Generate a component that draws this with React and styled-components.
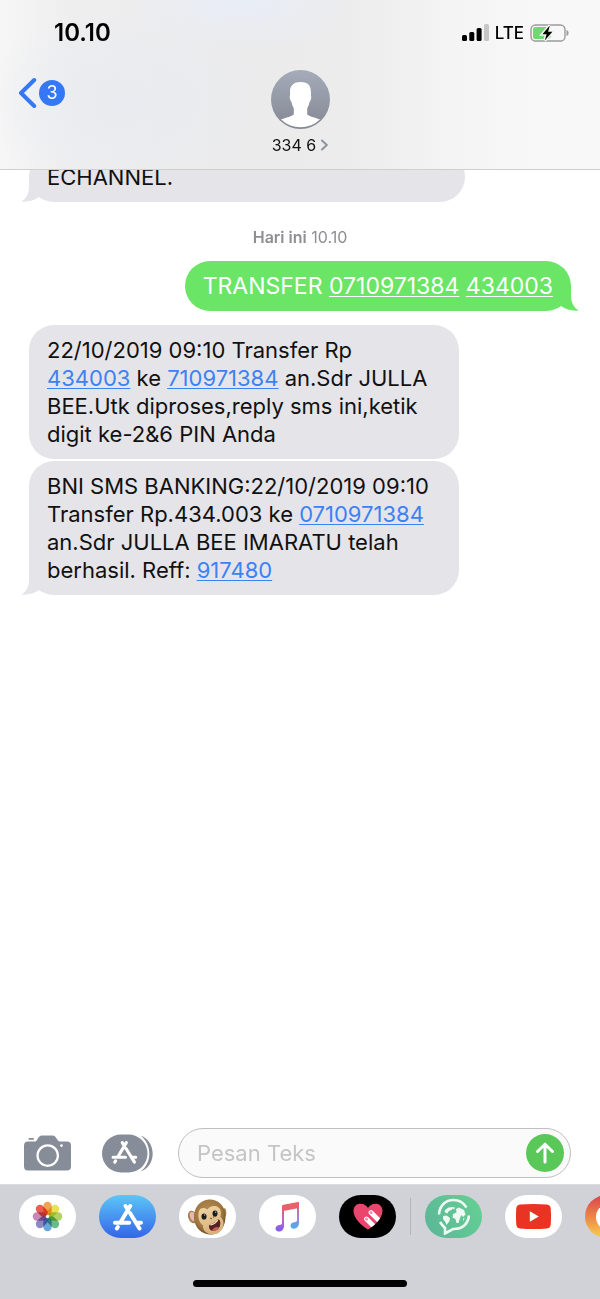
import React from "react";
import styled, { createGlobalStyle, css } from "styled-components";

const GlobalStyle = createGlobalStyle`
  * { box-sizing: border-box; }
  body {
    margin: 0;
    background: #fff;
    font-family: Inter, "Liberation Sans", sans-serif;
    color: #111;
  }
  button, input { font: inherit; color: inherit; }
  button { border: 0; padding: 0; margin: 0; background: none; cursor: pointer; }
  svg { display: block; flex: none; }
`;

const Screen = styled.div`
  display: flex;
  flex-direction: column;
  min-height: 100vh;
  overflow: hidden;
`;

const Header = styled.header`
  background:
    radial-gradient(ellipse 110px 50px at 40% 0, #e8edf6 0%, rgba(232, 237, 246, 0) 100%),
    radial-gradient(ellipse 140px 90px at 20% 60%, #e9ebf0 0%, rgba(233, 235, 240, 0) 100%),
    linear-gradient(90deg, #f6f6f6 0%, #eeeeef 12%, #ebebec 40%, #ececed 58%, #f4f4f4 76%, #f8f8f8 90%);
  border-bottom: 1px solid #cfcfcf;
`;

const StatusBar = styled.div`
  display: flex;
  align-items: center;
  justify-content: space-between;
  height: 66px;
  padding: 0 31px 0 54px;
  color: #000;
`;

const Clock = styled.time`
  font-size: 24px;
  line-height: 28px;
  font-weight: 600;
`;

const StatusIcons = styled.div`
  display: flex;
  align-items: center;
  gap: 6px;
  font-size: 17px;
  line-height: 20px;
  font-weight: 500;
`;

const NavBar = styled.nav`
  display: grid;
  grid-template-columns: 1fr auto 1fr;
  align-items: start;
  padding: 4px 18px 14px;
`;

const BackButton = styled.button`
  display: flex;
  align-items: center;
  justify-self: start;
  gap: 2px;
  height: 46px;
`;

const UnreadBadge = styled.span`
  display: grid;
  place-items: center;
  width: 26px;
  height: 26px;
  border-radius: 50%;
  background: #3478f6;
  color: #fff;
  font-size: 18px;
  line-height: 26px;
`;

const Contact = styled.button`
  display: flex;
  flex-direction: column;
  align-items: center;
  gap: 6px;
`;

const ContactName = styled.span`
  display: flex;
  align-items: center;
  gap: 5px;
  font-size: 16px;
  line-height: 20px;
`;

const Thread = styled.main`
  flex: 1;
  display: flex;
  flex-direction: column;
  overflow: hidden;
  padding: 0 29px 24px;
`;

const Bubble = styled.article`
  position: relative;
  align-self: flex-start;
  max-width: 430px;
  padding: 11px 18px;
  border-radius: 25px;
  background: #e5e4e9;
  font-size: 22px;
  line-height: 28px;
  margin-top: 2px;
  a { color: #3b82f6; text-decoration: underline; text-decoration-thickness: 1px; text-underline-offset: 2px; }

  ${(p) => p.$scrolled && css`
    width: 436px;
    max-width: 100%;
    margin-top: -18px;
  `}
  ${(p) => p.$first && css`
    margin-top: 14px;
  `}
  ${(p) => p.$sent && css`
    align-self: flex-end;
    margin-top: 0;
    background: #6ae566;
    color: #fff;
    font-size: 23px;
    a { color: #fff; }
  `}
`;

const TailShape = styled.svg`
  position: absolute;
  bottom: 0;
  ${(p) => (p.$sent ? "right: -8px; transform: scaleX(-1);" : "left: -8px;")}
`;

const DateStamp = styled.p`
  margin: 25px 0 14px;
  text-align: center;
  font-size: 16px;
  line-height: 20px;
  color: #8e8e93;
  b { font-weight: 600; }
`;

const Composer = styled.form`
  display: flex;
  align-items: center;
  gap: 25px;
  padding: 0 29px 6px 24px;
`;

const ComposerActions = styled.div`
  display: flex;
  align-items: center;
  gap: 31px;
`;

const MessageField = styled.div`
  flex: 1;
  min-width: 0;
  display: flex;
  align-items: center;
  height: 50px;
  padding: 0 6px 0 18px;
  border: 1px solid #bfbfc3;
  border-radius: 25px;
  background: #fafafa;
`;

const MessageInput = styled.input`
  flex: 1;
  min-width: 0;
  padding: 0;
  border: 0;
  outline: 0;
  background: transparent;
  font-size: 22px;
  line-height: 28px;
  &::placeholder { color: #c5c5c8; opacity: 1; }
`;

const SendButton = styled.button`
  display: grid;
  place-items: center;
  width: 38px;
  height: 38px;
  border-radius: 50%;
  background: #5ac759;
`;

const Drawer = styled.footer`
  display: flex;
  flex-direction: column;
  align-items: center;
  gap: 42px;
  padding: 10px 0 12px;
  border-top: 1px solid #dcdce0;
  background: #d1d2d8;
`;

const AppStrip = styled.div`
  display: flex;
  align-items: center;
  align-self: stretch;
  gap: 23px;
  padding-left: 19px;
  overflow: hidden;
`;

const AppGroup = styled.div`
  display: flex;
  gap: 23px;
  flex: none;
  & + & {
    position: relative;
    padding-left: 6px;
  }
  & + &::before {
    content: "";
    position: absolute;
    left: -9px;
    top: 3px;
    width: 1px;
    height: 37px;
    background: #b4b5bb;
  }
`;

const AppButton = styled.button`
  display: grid;
  place-items: center;
  flex: none;
  width: 57px;
  height: 43px;
  border-radius: 22px;
  overflow: hidden;
  background: ${(p) => p.$fill || "#fff"};
`;

const HomeIndicator = styled.div`
  width: 214px;
  height: 7px;
  border-radius: 4px;
  background: #000;
`;

function Tail({ sent }) {
  return (
    <TailShape $sent={sent} width="18" height="26" viewBox="0 0 18 26" aria-hidden="true">
      <path
        d="M8 0V10C8 18 5 23 0 25.5C7 26.2 13 24.5 18 21V0Z"
        fill={sent ? "#6ae566" : "#e5e4e9"}
      />
    </TailShape>
  );
}

function SignalIcon() {
  return (
    <svg width="27" height="18" viewBox="0 0 27 18" aria-label="Signal">
      <rect x="0" y="11" width="5" height="6" rx="1.5" />
      <rect x="7.3" y="8" width="5" height="9" rx="1.5" />
      <rect x="14.6" y="4" width="5" height="13" rx="1.5" />
      <rect x="22" y="0" width="5" height="17" rx="1.5" fill="#c6c6c6" />
    </svg>
  );
}

function BatteryIcon() {
  return (
    <svg width="39" height="18" viewBox="0 0 39 18" aria-label="Charging">
      <rect x="1" y="1" width="34" height="16" rx="4.6" fill="none" stroke="#9b9b9b" strokeWidth="1.4" />
      <path d="M36.5 6C39.3 6.8 39.3 11.2 36.5 12Z" fill="#9b9b9b" />
      <path d="M5.6 3H19L15 15H5.6Q3 15 3 12.4V5.6Q3 3 5.6 3Z" fill="#73d772" />
      <path d="M20.5 11L21.5 12L19 15H17.5Z" fill="#73d772" />
      <path d="M19.8 1.5L12.4 10.2H16.6L14.8 16.5L22.4 7.8H18.1Z" fill="#000" stroke="#f5f5f5" strokeWidth="3" paintOrder="stroke" />
    </svg>
  );
}

function Avatar() {
  return (
    <svg width="59" height="59" viewBox="0 0 59 59" aria-hidden="true">
      <defs>
        <linearGradient id="avatar-bg" x2="0" y2="1">
          <stop stopColor="#a6abb9" />
          <stop offset="1" stopColor="#848894" />
        </linearGradient>
        <clipPath id="avatar-clip"><circle cx="29.5" cy="29.5" r="27.8" /></clipPath>
      </defs>
      <circle cx="29.5" cy="29.5" r="29.5" fill="url(#avatar-bg)" />
      <path
        clipPath="url(#avatar-clip)"
        fill="#fff"
        d="M29.5 12C23 12 18.7 15.5 19 22C19.1 24 19.1 25 19 26C18.3 27 19 30.5 20.5 32C21 35 22 36.500 22.800 38.500V44.500C20 47 14 47.500 9 50V60H50V50C45 47.500 39 47 36.200 44.500V38.500C37 36.500 38 35 38.500 32C40 30.500 40.700 27 40 26C40.500 16 38 12 29.500 12Z"
      />
    </svg>
  );
}

const STORE_STROKES = "M18.2 3L8.2 19.8M13.5 3L16 7M18 10L27.5 25.5M3 19.8H17.2M24.2 19.8H29M5.8 24L4.9 25.5";

function StoreGlyph() {
  return (
    <svg width="32" height="28" viewBox="0 0 32 28" fill="none" stroke="#fff" strokeWidth="4" strokeLinecap="round" aria-hidden="true">
      <path d={STORE_STROKES} />
    </svg>
  );
}

function CameraIcon() {
  return (
    <svg width="47" height="36" viewBox="0 0 47 36" aria-hidden="true">
      <path d="M4 6.5H11C14 6.5 13.5 .5 18 .5H28.5C33 .5 32.5 6.5 36 6.5H43Q47 6.5 47 10.5V31.5Q47 35.5 43 35.5H4Q0 35.5 0 31.5V10.5Q0 6.5 4 6.5Z" fill="#878d98" />
      <rect x="4.5" y="3" width="5.5" height="1.8" rx=".9" fill="#878d98" />
      <circle cx="23.7" cy="20.6" r="10.2" fill="none" stroke="#fff" strokeWidth="2.2" />
      <circle cx="37.5" cy="10.6" r="1.3" fill="#fff" />
    </svg>
  );
}

function AppDrawerIcon() {
  return (
    <svg width="51" height="39" viewBox="0 0 51 39" aria-hidden="true">
      <rect x="0" y=".5" width="45.5" height="38" rx="19" fill="#878d98" />
      <path d="M38.5 1.5C54.5 7 55 32 38.5 37.5C50.5 29 50 10 38.5 1.5Z" fill="#878d98" />
      <g transform="translate(8.5 6) scale(.87)" fill="none" stroke="#fff" strokeWidth="3.6" strokeLinecap="round">
        <path d={STORE_STROKES} />
      </g>
    </svg>
  );
}

const PETALS = ["#f0973a", "#e6dd3c", "#a8cc4c", "#55b27c", "#5598d4", "#7d77b8", "#c078ad", "#e4483c"];

const Petal = styled.rect`
  mix-blend-mode: multiply;
`;

function PhotosIcon() {
  return (
    <svg width="31" height="31" viewBox="0 0 31 31" aria-hidden="true">
      {PETALS.map((color, i) => (
        <Petal
          key={color}
          x="11.3"
          y=".7"
          width="8.4"
          height="13.5"
          rx="4.2"
          fill={color}
          fillOpacity=".88"
          transform={`rotate(${i * 45} 15.5 15.5)`}
        />
      ))}
      <circle cx="15.5" cy="15.5" r="1.2" fill="#fff" />
    </svg>
  );
}

function MonkeyIcon() {
  return (
    <svg width="39" height="36" viewBox="0 0 39 36" aria-hidden="true">
      <defs>
        <radialGradient id="monkey-fur" cx=".45" cy=".4" r=".6">
          <stop stopColor="#b99156" />
          <stop offset=".75" stopColor="#9c7540" />
          <stop offset="1" stopColor="#6d4d26" />
        </radialGradient>
        <linearGradient id="monkey-face" x2=".3" y2="1">
          <stop stopColor="#f1d5a4" />
          <stop offset="1" stopColor="#d9b27c" />
        </linearGradient>
      </defs>
      <ellipse cx="4.5" cy="18" rx="4.3" ry="6.5" fill="#a8824f" transform="rotate(-18 4.5 18)" />
      <ellipse cx="4.8" cy="17.5" rx="2.7" ry="4.7" fill="#e8b8b4" transform="rotate(-18 4.8 17.5)" />
      <ellipse cx="36.5" cy="13.5" rx="1.8" ry="4.3" fill="#a8824f" />
      <path d="M21 .5C30 0 37 7 37.5 16C38 26 33 35.5 24 35.5C14 36 7 29 6 20C5 9 12 1 21 .5Z" fill="url(#monkey-fur)" />
      <path d="M11 12C12 8.5 16.5 8 19.5 10.5C21.5 7 27 6 30.5 8.5C33.5 10.5 33 15 32.5 18C36 21 36.5 26 34 30C32 34 28 35.3 24 35.3C18 35 14.5 31 15 26.5C10.5 23 9.500 17 11 12Z" fill="url(#monkey-face)" />
      <ellipse cx="16" cy="17.5" rx="2.5" ry="3.1" fill="#161b1d" />
      <ellipse cx="27" cy="14.6" rx="2.5" ry="3.1" fill="#161b1d" />
      <circle cx="16.7" cy="16" r=".7" fill="#aec0c4" />
      <circle cx="27.7" cy="13.2" r=".7" fill="#aec0c4" />
      <path d="M22.3 19.3L23.5 19.6M25.3 18.3L26 17.8" stroke="#8a6238" strokeWidth="1.1" strokeLinecap="round" />
      <path d="M21.5 26C24 25 28 23 30 20.5C32.5 20 33 25 31.5 28C29.5 32 24 33 22 30.5C21 29 20.5 26.5 21.5 26Z" fill="#54211e" />
      <path d="M24 31.5C25 28.5 29 27 31 28.5C29.5 31.5 27 32.5 24 31.5Z" fill="#c35c5a" />
      <path d="M22.5 26.2C25 25.5 28 23.5 29.8 21.3" stroke="#f3e4d4" strokeWidth="1.2" fill="none" />
    </svg>
  );
}

function MusicIcon() {
  return (
    <svg width="25" height="30" viewBox="0 0 25 30" aria-hidden="true">
      <defs>
        <linearGradient id="music-left" x2="0" y2="1">
          <stop stopColor="#ec5a65" />
          <stop offset=".5" stopColor="#c768b8" />
          <stop offset="1" stopColor="#7b5cf6" />
        </linearGradient>
        <linearGradient id="music-right" x2="0" y2="1">
          <stop stopColor="#ec5a65" />
          <stop offset=".5" stopColor="#b779cf" />
          <stop offset="1" stopColor="#45b0f4" />
        </linearGradient>
      </defs>
      <path d="M7 4L9 3V24C9 27.5 6.5 29.5 4 29.5C1.5 29.5 .5 28 .5 26.5C.5 24.5 2 23.4 4 23C6 22.7 7 22.5 7 21Z" fill="url(#music-left)" />
      <path d="M22 .8L24 .3V21C24 24.5 21.5 26.7 19 26.7C16.5 26.7 15.5 25.3 15.5 23.8C15.5 21.8 17 20.6 19 20.3C21 20 22 19.8 22 18Z" fill="url(#music-right)" />
      <path d="M7 4.5Q7 3 8.5 2.7L23 0Q24 0 24 1V6L7 9.2Z" fill="#e95f6b" />
    </svg>
  );
}

const HEART_PATH = "M15 26.5C10 23.5 .5 16 .5 8C.5 3.5 3.5 .8 7.5 .8C11 .8 13.5 2.5 15 5C16.5 2.5 19 .8 22.5 .8C26.5 .8 29.5 3.5 29.5 8C29.5 16 20 23.5 15 26.5Z";

function HeartIcon() {
  return (
    <svg width="30" height="27" viewBox="0 0 30 27" aria-hidden="true">
      <clipPath id="heart-clip"><path d={HEART_PATH} /></clipPath>
      <path d={HEART_PATH} fill="#eb456e" />
      <g clipPath="url(#heart-clip)" strokeLinecap="round">
        <path d="M13.5 16L22 24.5M18 9.5L28 19.5" stroke="#fff" strokeWidth="4.8" />
        <path d="M13.3 15.8L13.8 16.3M17.8 9.3L18.3 9.8" stroke="#f28ba5" strokeWidth="2.6" />
      </g>
    </svg>
  );
}

function GlobeChatIcon() {
  return (
    <svg width="34" height="37" viewBox="0 0 34 37" fill="#effaf4" aria-hidden="true">
      <path d="M2 16.5C2.5 7 9 2 16.5 2C22 2 26.5 4.5 29.5 9.5M32 17.5C31 27 24 31.5 16 31L8 35.5V30C5 27 4 25.5 3 24" fill="none" stroke="#effaf4" strokeWidth="2.6" />
      <path d="M8 12L11.5 9.5L17 9L14.5 12L12 13L10 15.5L7.5 14ZM6 18L9.5 17.5L13 20L12.5 23L9.5 27L8 23.5L6 21Z" />
      <path d="M19 11L22 9.5L27 12L28.5 16.5L26 19L24.5 17L23 20L21.5 25H19.5L18.5 21L15.5 19.5L16 16L19.5 14.5ZM15 10L17.5 9V11.5ZM26 20.5L27.5 20L26.5 23.5Z" />
    </svg>
  );
}

function PlayIcon() {
  return (
    <svg width="35" height="25" viewBox="0 0 35 25" aria-hidden="true">
      <path d="M4 .6Q17.5 -.6 31 .6Q34.4 1 34.7 4.5Q35.3 12.5 34.7 20.5Q34.4 24 31 24.4Q17.5 25.6 4 24.4Q.6 24 .3 20.5Q-.3 12.5 .3 4.5Q.6 1 4 .6Z" fill="#e93323" />
      <path d="M13.8 7.3L22.8 12.5L13.8 17.7Z" fill="#fff" />
    </svg>
  );
}

function RingIcon() {
  return (
    <svg width="36" height="28" viewBox="0 0 36 28" aria-hidden="true">
      <rect width="36" height="28" rx="14" fill="#fff" />
    </svg>
  );
}

const APPS = [
  { name: "Foto", icon: <PhotosIcon /> },
  { name: "App Store", fill: "linear-gradient(#5cc6f6, #3465e8)", icon: <StoreGlyph /> },
  { name: "Animoji", icon: <MonkeyIcon /> },
  { name: "Musik", icon: <MusicIcon /> },
  { name: "Digital Touch", fill: "#000", icon: <HeartIcon /> },
];

const EXTRA_APPS = [
  { name: "Terjemah", fill: "linear-gradient(60deg, #5ab597, #66d193)", icon: <GlobeChatIcon /> },
  { name: "Video", icon: <PlayIcon /> },
  { name: "Lainnya", fill: "linear-gradient(#d9434f, #e97e48 45%, #f7cf4e)", icon: <RingIcon /> },
];

function AppList({ apps }) {
  return (
    <AppGroup>
      {apps.map((app) => (
        <AppButton key={app.name} type="button" aria-label={app.name} $fill={app.fill}>
          {app.icon}
        </AppButton>
      ))}
    </AppGroup>
  );
}

export default function App() {
  return (
    <Screen>
      <GlobalStyle />
      <Header>
        <StatusBar>
          <Clock>10.10</Clock>
          <StatusIcons>
            <SignalIcon />
            <span>LTE</span>
            <BatteryIcon />
          </StatusIcons>
        </StatusBar>
        <NavBar>
          <BackButton type="button" aria-label="Kembali">
            <svg width="19" height="32" viewBox="0 0 19 32" fill="none" stroke="#3478f6" strokeWidth="4" strokeLinecap="round" strokeLinejoin="round" aria-hidden="true">
              <path d="M16.2 3L3 16L16.2 29" />
            </svg>
            <UnreadBadge>3</UnreadBadge>
          </BackButton>
          <Contact type="button">
            <Avatar />
            <ContactName>
              334 6
              <svg width="7" height="12" viewBox="0 0 7 12" fill="none" stroke="#8e949e" strokeWidth="2" strokeLinecap="round" strokeLinejoin="round" aria-hidden="true">
                <path d="M1 1.5L5.8 6L1 10.5" />
              </svg>
            </ContactName>
          </Contact>
        </NavBar>
      </Header>

      <Thread>
        <Bubble $scrolled>
          ECHANNEL.
          <Tail />
        </Bubble>
        <DateStamp><b>Hari ini</b> 10.10</DateStamp>
        <Bubble $sent>
          TRANSFER <a href="tel:0710971384">0710971384</a> <a href="tel:434003">434003</a>
          <Tail sent />
        </Bubble>
        <Bubble $first>
          22/10/2019 09:10 Transfer Rp <a href="tel:434003">434003</a> ke{" "}
          <a href="tel:710971384">710971384</a> an.Sdr JULLA BEE.Utk diproses,reply sms ini,ketik
          digit ke-2&amp;6 PIN Anda
        </Bubble>
        <Bubble>
          BNI SMS BANKING:22/10/2019 09:10 Transfer Rp.434.003 ke{" "}
          <a href="tel:0710971384">0710971384</a> an.Sdr JULLA BEE IMARATU telah berhasil. Reff:{" "}
          <a href="tel:917480">917480</a>
          <Tail />
        </Bubble>
      </Thread>

      <Composer onSubmit={(e) => e.preventDefault()}>
        <ComposerActions>
          <button type="button" aria-label="Kamera"><CameraIcon /></button>
          <button type="button" aria-label="Aplikasi"><AppDrawerIcon /></button>
        </ComposerActions>
        <MessageField>
          <MessageInput type="text" placeholder="Pesan Teks" aria-label="Pesan Teks" />
          <SendButton type="submit" aria-label="Kirim">
            <svg width="20" height="22" viewBox="0 0 20 22" fill="none" stroke="#fff" strokeWidth="3" strokeLinecap="round" strokeLinejoin="round" aria-hidden="true">
              <path d="M10 20V2.5M2.5 9.5L10 2.2L17.5 9.5" />
            </svg>
          </SendButton>
        </MessageField>
      </Composer>

      <Drawer>
        <AppStrip>
          <AppList apps={APPS} />
          <AppList apps={EXTRA_APPS} />
        </AppStrip>
        <HomeIndicator />
      </Drawer>
    </Screen>
  );
}
